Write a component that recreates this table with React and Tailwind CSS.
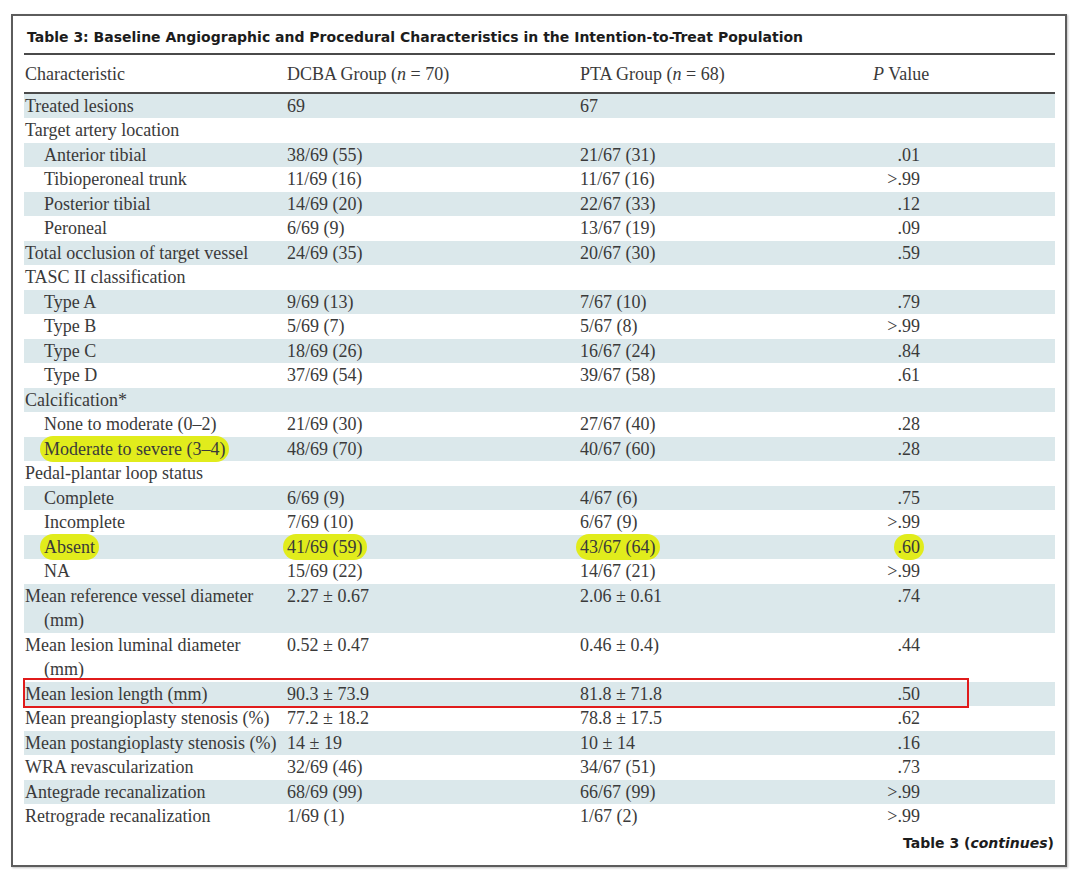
const rows = [
  { label: 'Treated lesions', a: '69', b: '67', p: '' },
  { label: 'Target artery location' },
  { label: 'Anterior tibial', sub: true, a: '38/69 (55)', b: '21/67 (31)', p: '.01' },
  { label: 'Tibioperoneal trunk', sub: true, a: '11/69 (16)', b: '11/67 (16)', p: '>.99' },
  { label: 'Posterior tibial', sub: true, a: '14/69 (20)', b: '22/67 (33)', p: '.12' },
  { label: 'Peroneal', sub: true, a: '6/69 (9)', b: '13/67 (19)', p: '.09' },
  { label: 'Total occlusion of target vessel', a: '24/69 (35)', b: '20/67 (30)', p: '.59' },
  { label: 'TASC II classification' },
  { label: 'Type A', sub: true, a: '9/69 (13)', b: '7/67 (10)', p: '.79' },
  { label: 'Type B', sub: true, a: '5/69 (7)', b: '5/67 (8)', p: '>.99' },
  { label: 'Type C', sub: true, a: '18/69 (26)', b: '16/67 (24)', p: '.84' },
  { label: 'Type D', sub: true, a: '37/69 (54)', b: '39/67 (58)', p: '.61' },
  { label: 'Calcification*' },
  { label: 'None to moderate (0–2)', sub: true, a: '21/69 (30)', b: '27/67 (40)', p: '.28' },
  { label: 'Moderate to severe (3–4)', sub: true, a: '48/69 (70)', b: '40/67 (60)', p: '.28', hl: ['label'] },
  { label: 'Pedal-plantar loop status' },
  { label: 'Complete', sub: true, a: '6/69 (9)', b: '4/67 (6)', p: '.75' },
  { label: 'Incomplete', sub: true, a: '7/69 (10)', b: '6/67 (9)', p: '>.99' },
  { label: 'Absent', sub: true, a: '41/69 (59)', b: '43/67 (64)', p: '.60', hl: ['label', 'a', 'b', 'p'] },
  { label: 'NA', sub: true, a: '15/69 (22)', b: '14/67 (21)', p: '>.99' },
  { label: 'Mean reference vessel diameter', wrap: '(mm)', a: '2.27 ± 0.67', b: '2.06 ± 0.61', p: '.74' },
  { label: 'Mean lesion luminal diameter', wrap: '(mm)', a: '0.52 ± 0.47', b: '0.46 ± 0.4)', p: '.44' },
  { label: 'Mean lesion length (mm)', a: '90.3 ± 73.9', b: '81.8 ± 71.8', p: '.50', boxed: true },
  { label: 'Mean preangioplasty stenosis (%)', a: '77.2 ± 18.2', b: '78.8 ± 17.5', p: '.62' },
  { label: 'Mean postangioplasty stenosis (%)', a: '14 ± 19', b: '10 ± 14', p: '.16' },
  { label: 'WRA revascularization', a: '32/69 (46)', b: '34/67 (51)', p: '.73' },
  { label: 'Antegrade recanalization', a: '68/69 (99)', b: '66/67 (99)', p: '>.99' },
  { label: 'Retrograde recanalization', a: '1/69 (1)', b: '1/67 (2)', p: '>.99' },
]

const Mark = ({ on, children }) =>
  on ? <span className="bg-[#e1ec1c] rounded-full px-[4px] -mx-[4px] py-[3px]">{children}</span> : children

function Row({ r, i }) {
  const hl = r.hl || []
  return (
    <div className={`relative grid grid-cols-[263px_293px_280px_60px] ${i % 2 === 0 ? 'bg-[#dbe8eb]' : ''}`}>
      <div className={r.sub ? 'pl-[20px]' : 'pl-[1px]'}>
        <div className="whitespace-nowrap"><Mark on={hl.includes('label')}>{r.label}</Mark></div>
        {r.wrap && <div className="pl-[19px]">{r.wrap}</div>}
      </div>
      <div className="whitespace-nowrap"><Mark on={hl.includes('a')}>{r.a}</Mark></div>
      <div className="whitespace-nowrap"><Mark on={hl.includes('b')}>{r.b}</Mark></div>
      <div className="whitespace-nowrap text-right"><Mark on={hl.includes('p')}>{r.p}</Mark></div>
      {r.boxed && <div className="absolute left-[-1px] top-[-4px] w-[946px] h-[30px] border-2 border-[#e01b1b]" />}
    </div>
  )
}

export default function App() {
  return (
    <div className="w-[1080px] h-[885px] bg-white pt-[14px] pl-[11px]">
      <div className="w-[1056px] h-[853px] border-2 border-[#5c5c5c] shadow-[1px_1px_2px_rgba(0,0,0,0.25)] pl-[11px] pr-[10px]">
        <h1 className="pt-[11px] pb-[6px] pl-[3px] text-[14px] leading-[20px] font-bold text-[#1c1c1c] whitespace-nowrap font-['DejaVu_Sans',sans-serif]">
          Table 3: Baseline Angiographic and Procedural Characteristics in the Intention-to-Treat Population
        </h1>
        <div className="font-['Liberation_Serif',serif] text-[18px] leading-[24.5px] text-[#3a3a3a]">
          <div className="border-t-2 border-b-2 border-[#4a4a4a] grid grid-cols-[263px_293px_280px_60px] pt-[7px] pb-[5px]">
            <div className="pl-[1px]">Characteristic</div>
            <div className="whitespace-nowrap">DCBA Group (<i>n</i> = 70)</div>
            <div className="whitespace-nowrap">PTA Group (<i>n</i> = 68)</div>
            <div className="whitespace-nowrap pl-[13px]"><i>P</i> Value</div>
          </div>
          {rows.map((r, i) => <Row key={i} r={r} i={i} />)}
          <div className="text-right pt-[4px] pr-[1px] text-[14px] leading-[20px] font-bold text-[#1c1c1c] font-['DejaVu_Sans',sans-serif]">
            Table 3 (<i>continues</i>)
          </div>
        </div>
      </div>
    </div>
  )
}
